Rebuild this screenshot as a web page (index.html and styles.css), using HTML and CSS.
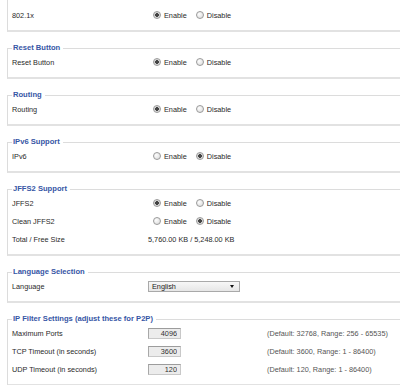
FILE: index.html
```html
<!DOCTYPE html>
<html lang="en">

<head>
    <meta charset="UTF-8">
    <meta name="viewport" content="width=device-width, initial-scale=1.0">
    <title>Management</title>
    <link rel="stylesheet" href="styles.css">
</head>

<body>
    <div class="contenido">
        <fieldset class="primero">
            <legend>802.1x</legend>
            <div class="setting">
                <div class="label">802.1x</div>
                <label class="opcion"><input type="radio" name="dot1x" checked>Enable</label>
                <label class="opcion"><input type="radio" name="dot1x">Disable</label>
            </div>
        </fieldset>

        <fieldset>
            <legend>Reset Button</legend>
            <div class="setting">
                <div class="label">Reset Button</div>
                <label class="opcion"><input type="radio" name="resetbutton" checked>Enable</label>
                <label class="opcion"><input type="radio" name="resetbutton">Disable</label>
            </div>
        </fieldset>

        <fieldset>
            <legend>Routing</legend>
            <div class="setting">
                <div class="label">Routing</div>
                <label class="opcion"><input type="radio" name="routing" checked>Enable</label>
                <label class="opcion"><input type="radio" name="routing">Disable</label>
            </div>
        </fieldset>

        <fieldset>
            <legend>IPv6 Support</legend>
            <div class="setting">
                <div class="label">IPv6</div>
                <label class="opcion"><input type="radio" name="ipv6">Enable</label>
                <label class="opcion"><input type="radio" name="ipv6" checked>Disable</label>
            </div>
        </fieldset>

        <fieldset>
            <legend>JFFS2 Support</legend>
            <div class="setting">
                <div class="label">JFFS2</div>
                <label class="opcion"><input type="radio" name="jffs" checked>Enable</label>
                <label class="opcion"><input type="radio" name="jffs">Disable</label>
            </div>
            <div class="setting">
                <div class="label">Clean JFFS2</div>
                <label class="opcion"><input type="radio" name="cleanjffs">Enable</label>
                <label class="opcion"><input type="radio" name="cleanjffs" checked>Disable</label>
            </div>
            <div class="setting">
                <div class="label">Total / Free Size</div>
                <span class="valor">5,760.00 KB / 5,248.00 KB</span>
            </div>
        </fieldset>

        <fieldset>
            <legend>Language Selection</legend>
            <div class="setting">
                <div class="label">Language</div>
                <div class="select">
                    <span>English</span>
                    <span class="flecha"></span>
                </div>
            </div>
        </fieldset>

        <fieldset>
            <legend>IP Filter Settings (adjust these for P2P)</legend>
            <div class="setting">
                <div class="label">Maximum Ports</div>
                <input class="num" type="text" value="4096">
                <span class="default">(Default: 32768, Range: 256 - 65535)</span>
            </div>
            <div class="setting">
                <div class="label">TCP Timeout (in seconds)</div>
                <input class="num" type="text" value="3600">
                <span class="default">(Default: 3600, Range: 1 - 86400)</span>
            </div>
            <div class="setting">
                <div class="label">UDP Timeout (in seconds)</div>
                <input class="num" type="text" value="120">
                <span class="default">(Default: 120, Range: 1 - 86400)</span>
            </div>
        </fieldset>
    </div>
</body>

</html>
```

FILE: styles.css
```css
* {
    padding: 0;
    margin: 0;
    box-sizing: border-box;
}

html,
body {
    height: 385px;
    overflow: hidden;
}

body {
    background: #fff;
    font-family: "Liberation Sans", Arial, sans-serif;
    font-size: 7.3px;
    color: #2a2a2a;
}

.contenido {
    width: 460px;
    padding-left: 7px;
    margin-top: -22px;
}

fieldset {
    border: 1px solid #dcdcdc;
    border-bottom: 2px solid #e2e2e2;
    padding: 0 0 6px 4px;
    margin-bottom: 11px;
}

fieldset.primero {
    padding-top: 18px;
}

legend {
    color: #3656a5;
    font-weight: bold;
    font-size: 7.6px;
    line-height: 10px;
    padding: 0 3px 0 1px;
}

.setting {
    display: flex;
    align-items: center;
    height: 18px;
}

.label {
    width: 136px;
}

.opcion {
    display: flex;
    align-items: center;
    margin-right: 4px;
}

input[type="radio"] {
    appearance: none;
    width: 8px;
    height: 8px;
    border-radius: 50%;
    border: 1px solid #9a9a9a;
    background: radial-gradient(circle at 35% 35%, #fdfdfd, #d8d8d8);
    margin: 0 3px 0 5px;
}

input[type="radio"]:checked {
    background: radial-gradient(circle, #444 0 1.6px, #cfcfcf 2px, #e6e6e6 3.5px);
}

.select {
    width: 92px;
    height: 11px;
    border: 1px solid #a9a9a9;
    background: linear-gradient(#f7f7f7, #e6e6e6);
    display: flex;
    align-items: center;
    justify-content: space-between;
    padding: 0 5px 0 3px;
    color: #222;
}

.flecha {
    width: 0;
    height: 0;
    border-left: 2.5px solid transparent;
    border-right: 2.5px solid transparent;
    border-top: 3px solid #111;
}

input.num {
    width: 33px;
    height: 11px;
    border: 1px solid #c8c8c8;
    border-top-color: #9c9c9c;
    border-left-color: #a8a8a8;
    background: #ececec;
    font-family: "Liberation Sans", Arial, sans-serif;
    font-size: 7.3px;
    color: #333;
    text-align: right;
    padding-right: 3px;
}

.default {
    margin-left: 86px;
    color: #555;
}
```
